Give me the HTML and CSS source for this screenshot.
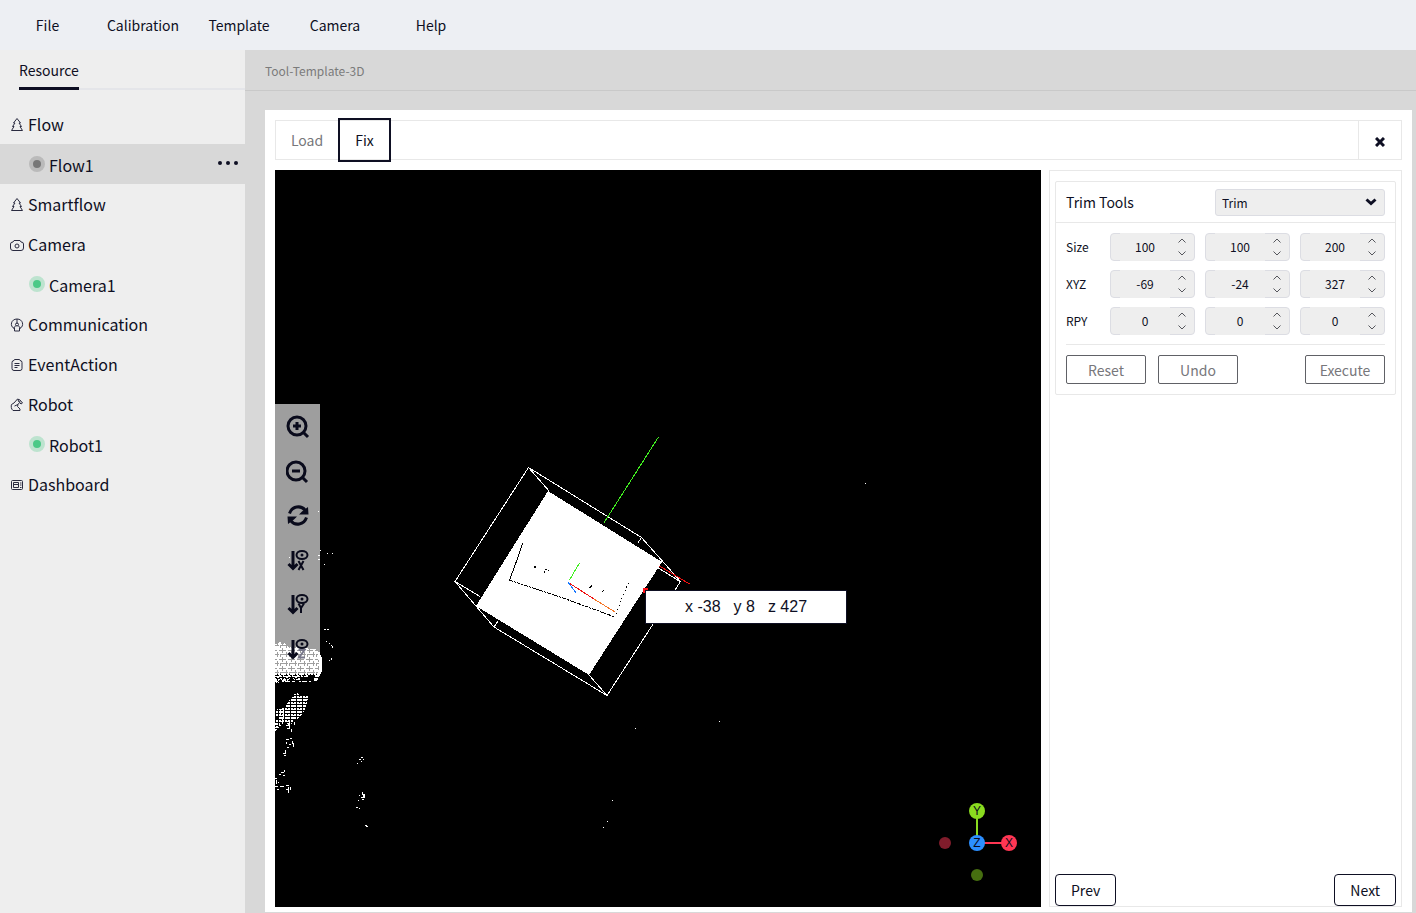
FILE: index.html
```html
<!DOCTYPE html>
<html lang="en">
<head>
<meta charset="utf-8">
<title>Tool-Template-3D</title>
<link rel="stylesheet" href="styles.css">
</head>
<body>
<nav class="menubar" aria-label="Main menu">
  <button class="menu-item">File</button>
  <button class="menu-item">Calibration</button>
  <button class="menu-item">Template</button>
  <button class="menu-item">Camera</button>
  <button class="menu-item">Help</button>
</nav>
<div class="shell">
  <aside class="sidebar">
    <div class="side-tabs"><a class="side-tab" href="#resource">Resource</a></div>
    <ul class="tree" id="resource">
      <li class="node">
        <svg class="node-icon" viewBox="0 0 14 14"><path d="M7 .5 3.500 5H5L2.500 8.500H4l-2.500 4h11l-2.500-4h1.500L9 5h1.500Z"/></svg>
        <a href="#flow">Flow</a></li>
      <li class="node leaf selected"><span class="dot"></span><a href="#flow1">Flow1</a>
        <button class="more" aria-label="More actions"><i></i><i></i><i></i></button></li>
      <li class="node">
        <svg class="node-icon" viewBox="0 0 14 14"><path d="M7 .5 3.500 5H5L2.500 8.500H4l-2.500 4h11l-2.500-4h1.500L9 5h1.500Z"/></svg>
        <a href="#smartflow">Smartflow</a></li>
      <li class="node">
        <svg class="node-icon" viewBox="0 0 14 14"><path d="M4 2.500h6l1 1.500q2.500 0 2.500 2v4q0 2.500-2.500 2.500H3Q.5 12.500.5 10V6q0-2 2.500-2Z"/><circle cx="7" cy="8" r="2"/></svg>
        <a href="#camera">Camera</a></li>
      <li class="node leaf"><span class="dot online"></span><a href="#camera1">Camera1</a></li>
      <li class="node">
        <svg class="node-icon" viewBox="0 0 14 14"><path d="M4 10.500C-.5 8 1 1 7 1s7.500 7 3 9.500M7 1v5M6 7.500 3.500 10M8 7.500l2.500 2.500M4.500 9.500V13h5V9.500"/><circle cx="7" cy="6.500" r="1.500"/></svg>
        <a href="#communication">Communication</a></li>
      <li class="node">
        <svg class="node-icon" viewBox="0 0 14 14"><path d="M4.500 1.500h5l.5 1q2 0 2 2v6q0 2-2 2H4q-2 0-2-2v-6q0-2 2-2ZM4.500 5.500h5M4.500 7.500h5M4.500 9.500h3"/></svg>
        <a href="#eventaction">EventAction</a></li>
      <li class="node">
        <svg class="node-icon" viewBox="0 0 14 14"><path d="M3 12.500C1 11 1 8 1.500 6.500L4 5l3.500-4L10 2l2.500 3L11 6 9.500 4.500 8 6.500 4.500 8M8 6.500l-.5 2 2.500 2.500v1.500H3M8 1l.5 2.500 2 .5"/></svg>
        <a href="#robot">Robot</a></li>
      <li class="node leaf"><span class="dot online"></span><a href="#robot1">Robot1</a></li>
      <li class="node">
        <svg class="node-icon" viewBox="0 0 14 14"><rect x="1.500" y="2.500" width="11" height="9" rx="1"/><path d="M3.500 4.500h5v5h-5ZM3.500 6.500h5M10 5h1.500M10 7h1.500M10 9.500h1.500"/></svg>
        <a href="#dashboard">Dashboard</a></li>
    </ul>
  </aside>
  <main class="main">
    <header class="crumb">Tool-Template-3D</header>
    <section class="panel">
      <div class="steps">
        <button class="step">Load</button>
        <button class="step active">Fix</button>
        <button class="close" aria-label="Close"><svg viewBox="0 0 10 10"><path d="m1 1 8 8M9 1 1 9"/></svg></button>
      </div>
      <div class="work">
        <div class="viewer">
          <svg class="scene" viewBox="275 170 766 737" preserveAspectRatio="xMinYMin meet" role="img" aria-label="Point cloud">
            <defs>
              <pattern id="dense" width="9" height="9" patternUnits="userSpaceOnUse"><path fill="#fff" d="M0 0h9v9H0z"/><path stroke="#000" fill="none" d="M0 2.500h7M2 6.500h7M3.500 0v5M7.500 4v5M1.500 6v3"/></pattern>
              <pattern id="sparse" width="6" height="6" patternUnits="userSpaceOnUse"><path fill="#fff" d="M0 0h2v2H0zM3 0h2v2H3zM0 3h2v2H0zM3 3h3v2H3zM5 1h1v1H5z"/></pattern>
            </defs>
            <g shape-rendering="crispEdges">
              <path fill="url(#dense)" d="M275 644h3l1-2h2l1 3 3-2 3 4 6 1 4-1 6 1 8 1 7 1 1 4 2 4v10l-2 6-3 7h-3l1-5-5-2-3 4-4-2-3 4h-6l-2-3-5 4h-4l-3-2-2 5-3-2Z"/>
              <path fill="#fff" d="M318 652h2v5l2 2v12l-3 6h-2l2-9zM276 646h3v2h-3zM283 648h3v2h-3zM291 648h5v2h-5zM303 650h4v2h-4z"/>
              <path fill="none" stroke="#000" stroke-dasharray="4 2 2 1" d="M275 675.500h40M276 678.500h38"/>
              <path fill="none" stroke="#fff" stroke-dasharray="3 4 2 1 5 2" d="M275 681.500h36"/>
              <path fill="url(#sparse)" d="m293 695 4-2 4 3 6-1 2 3-2 3-1 7-4 6-5 5-5 3-1 4-3-1-2-4-5 1-2 6-4 3v-8l3-5-3-4 2-5 9-1 1-6 5-3Z"/>
              <path fill="none" stroke="#fff" d="M280.500 709v6M283.500 708v9M282.500 719v5M279 725.500h2M277 727.500h2M285 721.500h5M289.500 720v8M286 725.500h4M291.500 729v3M287 728.500h3M294.500 722v3M290 738.500h2M286 739.500h3M292.500 741v3M289 744.500h2M286.500 742v2M293.500 743v4M287 747.500h2M285.500 750v3M283 753.500h3M284 755.500h2M284.500 770v2M281 772.500h3M279 774.500h2M283 775.500h2M275 778.500h2M276.500 780v4M278 782.500h1M275 786.500h3M277 789.500h2M280 786.500h4M286 785.500h3M288.500 787v6M290.500 787v3M286 789.500h2"/>
              <path fill="none" stroke="#fff" d="M289 557.500h1M318 511.500h1M320 550.500h1M318 555.500h2M327 553.500h1M332 553.500h1M318 559.500h2M324 564.500h1M324 629.500h2M327 629.500h2M326 641.500h1M329 643.500h1M331 645.500h1M332.500 646v2M331.500 658v2M329 660.500h1M361 757.500h2M359 759.500h2M363 759.500h1M361 761.500h1M357 763.500h1M362.500 792v3M363.500 794v4M364.500 794v4M359 795.500h1M361 797.500h2M362 799.500h2M358 800.500h1M356 807.500h2M359 808.500h1M365 825.500h2M366 826.500h2M865 483.500h1M635 728.500h1M719 721.500h1M612 800.500h1M607 821.500h1M603 827.500h1"/>
              <path fill="#fff" d="m548 491 114 71-26 40-47 73-113-69Z"/>
              <g fill="none" stroke="#fff">
                <path d="m528.500 467.500 113 70 39 44-73.500 114L494 627l-39-45.500Z"/>
                <path d="m528.500 467.500 21 24M455 581.500l25 15M494 627l4-6M641.500 537.500l-4 6M589 675l18 20.500M680 581.500l-24-15M662 561l-6 8"/>
              </g>
              <path fill="none" stroke="#40f020" d="m658.500 437-55 86.500M579.500 563l-10 17"/>
              <path fill="none" stroke="#f01010" d="m659.500 566 30 18M569 583l25 16"/>
              <path fill="none" stroke="#f57525" d="m594 599 21 13"/>
              <path fill="none" stroke="#1677ff" d="m568 582 8 11"/>
              <path fill="#000" d="M534 566h2v2h-2zM544 571h1v2h-1zM545 569h2v1h-2zM548 570h1v1h-1zM589 587h2v1h-2zM590 586h2v1h-2zM591 585h1v1h-1zM603 590h1v1h-1zM602 591h1v1h-1z"/>
              <path fill="none" stroke="#000" d="m522.500 543-3 10-4 11-6 16"/>
              <path fill="none" stroke="#000" stroke-dasharray="4 1 2 1" d="m509 580 54 18 52 19"/>
              <path fill="none" stroke="#000" stroke-dasharray="1 3" d="m628.500 583-6 14-8 21"/>
              <path fill="#ff1018" d="M643 588h5v3h-3v2h-2z"/>
            </g>
          </svg>
          <div class="viewtools">
            <button aria-label="Zoom in"><svg viewBox="0 0 24 24"><circle cx="11" cy="11" r="9"/><path d="m17.500 17.500 4.500 4.500M7 11h8M11 7v8"/></svg></button>
            <button aria-label="Zoom out"><svg viewBox="0 0 24 24"><circle cx="10" cy="11" r="9"/><path d="m16.500 17.500 4.500 4.500M6 11h8"/></svg></button>
            <button aria-label="Reset view"><svg viewBox="0 0 24 24"><path d="M3.500 9.500C6 2 15 1 19 6M20.500 13.500C18 21 9 22 5 17"/><path class="solid" d="m22 3 .5 7.500H13l3-3zM2 20l-.5-7.500H11l-3 3z"/></svg></button>
            <button aria-label="View along X"><svg class="axis" viewBox="0 0 24 24"><path class="arrow" d="M7 2v17M2.500 15 7 19.500l4.500-4.500"/><ellipse cx="16" cy="6" rx="5.500" ry="4"/><circle class="solid" cx="16" cy="6" r="1.500"/><path d="m12.500 12 5 9M17.500 12l-5 9"/></svg></button>
            <button aria-label="View along Y"><svg class="axis" viewBox="0 0 24 24"><path class="arrow" d="M7 2v17M2.500 15 7 19.500l4.500-4.500"/><ellipse cx="16" cy="6" rx="5.500" ry="4"/><circle class="solid" cx="16" cy="6" r="1.500"/><path d="m12.500 10.500 2.500 4.500 3-4.500M15 14.500V20"/></svg></button>
            <button aria-label="View along Z"><svg class="axis" viewBox="0 0 24 24"><path class="arrow" d="M7 2v17M2.500 15 7 19.500l4.500-4.500"/><ellipse cx="16" cy="6" rx="5.500" ry="4"/><circle class="solid" cx="16" cy="6" r="1.500"/><path class="faded" d="M12.500 12h6l-5.500 7.500h6"/></svg></button>
          </div>
          <div class="tooltip"><span>x -38</span><span>y 8</span><span>z 427</span></div>
          <svg class="gizmo" viewBox="0 0 80 80" role="img" aria-label="Axes">
            <path stroke="#8adb1f" d="M40 40V8"/><path stroke="#ff3653" d="M40 40h32"/>
            <circle cx="8" cy="40" r="6" fill="#801c2b"/><circle cx="40" cy="72" r="6" fill="#466e10"/>
            <circle cx="40" cy="8" r="8" fill="#8adb1f"/><circle cx="72" cy="40" r="8" fill="#ff3653"/><circle cx="40" cy="40" r="8" fill="#2c8fff"/>
            <text x="40" y="12">Y</text><text x="72" y="44">X</text><text x="40" y="44">Z</text>
          </svg>
        </div>
        <div class="inspector">
          <form class="card">
            <div class="card-head"><label for="tool">Trim Tools</label>
              <div class="select"><select id="tool"><option>Trim</option></select>
              <svg viewBox="0 0 12 8"><path d="m1.500 1.500 4.500 4 4.500-4"/></svg></div></div>
            <div class="card-body">
              <div class="row"><span class="row-name" id="size">Size</span>
                <div class="num"><input aria-labelledby="size" value="100"><span class="spin"><button type="button" aria-label="Increase"><svg viewBox="0 0 8 5"><path d="M.5 4.500 4 1l3.500 3.500"/></svg></button><button type="button" aria-label="Decrease"><svg viewBox="0 0 8 5"><path d="M.5.500 4 4 7.500.500"/></svg></button></span></div>
                <div class="num"><input aria-labelledby="size" value="100"><span class="spin"><button type="button" aria-label="Increase"><svg viewBox="0 0 8 5"><path d="M.5 4.500 4 1l3.500 3.500"/></svg></button><button type="button" aria-label="Decrease"><svg viewBox="0 0 8 5"><path d="M.5.500 4 4 7.500.500"/></svg></button></span></div>
                <div class="num"><input aria-labelledby="size" value="200"><span class="spin"><button type="button" aria-label="Increase"><svg viewBox="0 0 8 5"><path d="M.5 4.500 4 1l3.500 3.500"/></svg></button><button type="button" aria-label="Decrease"><svg viewBox="0 0 8 5"><path d="M.5.500 4 4 7.500.500"/></svg></button></span></div>
              </div>
              <div class="row"><span class="row-name" id="xyz">XYZ</span>
                <div class="num"><input aria-labelledby="xyz" value="-69"><span class="spin"><button type="button" aria-label="Increase"><svg viewBox="0 0 8 5"><path d="M.5 4.500 4 1l3.500 3.500"/></svg></button><button type="button" aria-label="Decrease"><svg viewBox="0 0 8 5"><path d="M.5.500 4 4 7.500.500"/></svg></button></span></div>
                <div class="num"><input aria-labelledby="xyz" value="-24"><span class="spin"><button type="button" aria-label="Increase"><svg viewBox="0 0 8 5"><path d="M.5 4.500 4 1l3.500 3.500"/></svg></button><button type="button" aria-label="Decrease"><svg viewBox="0 0 8 5"><path d="M.5.500 4 4 7.500.500"/></svg></button></span></div>
                <div class="num"><input aria-labelledby="xyz" value="327"><span class="spin"><button type="button" aria-label="Increase"><svg viewBox="0 0 8 5"><path d="M.5 4.500 4 1l3.500 3.500"/></svg></button><button type="button" aria-label="Decrease"><svg viewBox="0 0 8 5"><path d="M.5.500 4 4 7.500.500"/></svg></button></span></div>
              </div>
              <div class="row"><span class="row-name" id="rpy">RPY</span>
                <div class="num"><input aria-labelledby="rpy" value="0"><span class="spin"><button type="button" aria-label="Increase"><svg viewBox="0 0 8 5"><path d="M.5 4.500 4 1l3.500 3.500"/></svg></button><button type="button" aria-label="Decrease"><svg viewBox="0 0 8 5"><path d="M.5.500 4 4 7.500.500"/></svg></button></span></div>
                <div class="num"><input aria-labelledby="rpy" value="0"><span class="spin"><button type="button" aria-label="Increase"><svg viewBox="0 0 8 5"><path d="M.5 4.500 4 1l3.500 3.500"/></svg></button><button type="button" aria-label="Decrease"><svg viewBox="0 0 8 5"><path d="M.5.500 4 4 7.500.500"/></svg></button></span></div>
                <div class="num"><input aria-labelledby="rpy" value="0"><span class="spin"><button type="button" aria-label="Increase"><svg viewBox="0 0 8 5"><path d="M.5 4.500 4 1l3.500 3.500"/></svg></button><button type="button" aria-label="Decrease"><svg viewBox="0 0 8 5"><path d="M.5.500 4 4 7.500.500"/></svg></button></span></div>
              </div>
              <div class="actions">
                <button type="button" class="act">Reset</button>
                <button type="button" class="act">Undo</button>
                <button type="button" class="act last">Execute</button>
              </div>
            </div>
          </form>
          <div class="pager"><button class="nav-btn">Prev</button><button class="nav-btn">Next</button></div>
        </div>
      </div>
    </section>
  </main>
</div>
</body>
</html>
```

FILE: styles.css
```css
* { box-sizing: border-box; }

body {
  margin: 0;
  min-height: 100vh;
  display: flex;
  flex-direction: column;
  background: #d8d8d8;
  color: #0e0f23;
  font-family: "Noto Sans CJK SC", "Noto Sans", sans-serif;
  font-size: 14px;
}

button, input, select { font: inherit; color: inherit; }
button { background: none; border: 0; padding: 0; }
a { color: inherit; text-decoration: none; }
svg { display: block; }

.menubar {
  display: flex;
  height: 50px;
  background: #edeff3;
}
.menu-item { width: 96px; }
.menubar .menu-item:first-child { width: 95px; }

.shell { flex: 1; display: flex; }

.sidebar { width: 245px; background: #eee; }
.side-tabs {
  display: flex;
  height: 40px;
  margin-left: 19px;
  border-bottom: 2px solid #e4e5e9;
}
.side-tab {
  height: 40px;
  line-height: 40px;
  border-bottom: 3px solid #0e0f23;
}
.tree {
  list-style: none;
  margin: 14px 0 0;
  padding: 0;
  font-size: 16px;
}
.node {
  display: flex;
  align-items: center;
  gap: 4px;
  height: 40px;
  padding-left: 10px;
}
.node-icon {
  width: 14px;
  height: 16px;
  padding-top: 2px;
  fill: none;
  stroke: #2a2b40;
  stroke-width: 1;
}
.leaf { padding-left: 29px; }
.leaf a { padding-top: 2px; }
.selected { background: #d8d8d8; }
.dot {
  width: 16px;
  height: 16px;
  border: 4px solid #bababa;
  border-radius: 50%;
  background: #777;
}
.dot.online { border-color: #bde3cf; background: #4bc987; }
.more { display: flex; gap: 4px; margin-left: auto; padding: 0 7px 2px 0; }
.more i { width: 4px; height: 4px; border-radius: 50%; background: #0e0f23; }

.main { flex: 1; min-width: 0; display: flex; flex-direction: column; }
.crumb {
  height: 41px;
  padding-left: 20px;
  border-bottom: 1px solid #c9c9c9;
  font-size: 12px;
  line-height: 42px;
  color: #7b7b7b;
}
.panel {
  flex: 1;
  display: flex;
  flex-direction: column;
  gap: 10px;
  margin: 19px 4px 1px 20px;
  padding: 10px 10px 5px;
  background: #fff;
}
.steps {
  display: flex;
  align-items: center;
  height: 40px;
  border: 1px solid #e8e8e8;
}
.step { width: 62px; height: 44px; color: #77777b; }
.step.active { width: 53px; border: 2px solid #0e0f23; color: #0e0f23; }
.close {
  display: grid;
  place-items: center;
  width: 43px;
  height: 38px;
  margin-left: auto;
  padding-top: 4px;
  border-left: 1px solid #e8e8e8;
}
.close svg { width: 10px; height: 10px; stroke: #0e0f23; stroke-width: 3; }

.work { flex: 1; display: flex; gap: 8px; }
.viewer { position: relative; flex: 1; min-width: 0; background: #000; }
.scene { width: 100%; }
.viewtools {
  position: absolute;
  left: 0;
  top: 234px;
  display: grid;
  grid-auto-rows: 1fr;
  width: 45px;
  height: 270px;
  padding: 1px 0 2px;
  background: rgba(255, 255, 255, .62);
}
.viewtools button { display: grid; place-items: center; }
.viewtools svg {
  width: 24px;
  height: 24px;
  fill: none;
  stroke: #0a0b1c;
  stroke-width: 3;
}
.viewtools .axis { stroke-width: 2; }
.viewtools .arrow { stroke-width: 3; }
.viewtools .solid { fill: #0a0b1c; stroke: none; }
.viewtools .faded { stroke: #77778a; }
.tooltip {
  position: absolute;
  left: 370px;
  top: 420px;
  display: flex;
  justify-content: center;
  gap: 13px;
  width: 202px;
  height: 34px;
  border: 1px solid #0e0f23;
  background: #fff;
  font: 16px/32px "Liberation Sans", Arial, sans-serif;
}
.gizmo {
  position: absolute;
  right: 24px;
  bottom: 24px;
  width: 80px;
  height: 80px;
  stroke-width: 2;
}
.gizmo text {
  font: 12px "Liberation Sans", Arial, sans-serif;
  text-anchor: middle;
  fill: #0a0b1c;
}

.inspector {
  display: flex;
  flex-direction: column;
  justify-content: space-between;
  width: 353px;
  padding: 10px 5px 0;
  border: 1px solid #e8e8e8;
}
.card { border: 1px solid #e8e8e8; border-radius: 2px; }
.card-head {
  display: flex;
  align-items: center;
  justify-content: space-between;
  height: 41px;
  padding: 0 10px;
  border-bottom: 1px solid #e8e8e8;
}
.select { position: relative; }
.select select {
  appearance: none;
  display: block;
  width: 170px;
  height: 27px;
  padding: 0 6px;
  border: 1px solid #dcdde3;
  border-radius: 3px;
  background: #eee;
  font-size: 12px;
}
.select svg {
  position: absolute;
  right: 8px;
  top: 9px;
  width: 12px;
  height: 8px;
  fill: none;
  stroke: #0e0f23;
  stroke-width: 3;
  pointer-events: none;
}
.card-body {
  display: flex;
  flex-direction: column;
  gap: 9px;
  padding: 10px;
  font-size: 12px;
}
.row { display: flex; align-items: center; gap: 10px; }
.row-name { width: 34px; line-height: 16px; }
.num {
  display: flex;
  width: 85px;
  height: 28px;
  padding-left: 9px;
  border: 1px solid #dcdde3;
  border-radius: 4px;
  background: #eee;
}
.num input {
  width: 50px;
  height: 28px;
  margin-top: -1px;
  padding: 0 0 2px;
  border: 0;
  background: #eee;
  text-align: center;
}
.spin { display: grid; width: 24px; }
.spin button { display: grid; place-items: center; }
.spin svg { width: 8px; height: 5px; fill: none; stroke: #55565c; }
.actions {
  display: flex;
  gap: 12px;
  padding-top: 10px;
  border-top: 1px solid #e8e8e8;
}
.act {
  width: 80px;
  height: 29px;
  border: 1px solid #606166;
  border-radius: 2px;
  color: #77777b;
  font-size: 14px;
}
.last { margin-left: auto; }
.pager { display: flex; justify-content: space-between; }
.nav-btn {
  height: 32px;
  padding: 0 15px;
  border: 1px solid #0e0f23;
  border-radius: 4px;
}
```
